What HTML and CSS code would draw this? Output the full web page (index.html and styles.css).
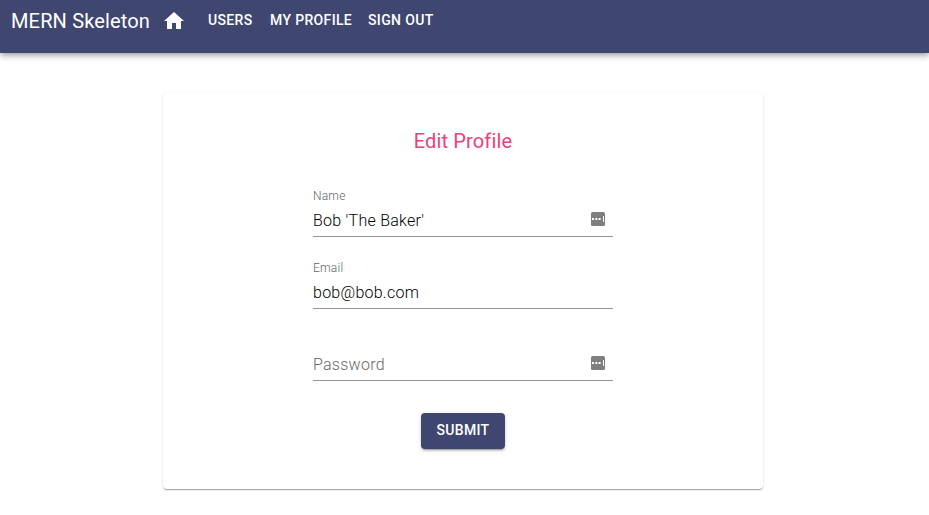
FILE: index.html
```html
<!DOCTYPE html>
<html lang="en">
<head>
<meta charset="utf-8">
<title>MERN Skeleton</title>
<link rel="stylesheet" href="styles.css">
</head>
<body>
<header class="bar">
  <h1 class="brand">MERN Skeleton</h1>
  <a class="home"><svg viewBox="0 0 24 24"><path d="M10 20v-6h4v6h5v-8h3L12 3 2 12h3v8z"/></svg></a>
  <nav class="nav">
    <a class="link users">Users</a>
    <a class="link profile">My Profile</a>
    <a class="link signout">Sign out</a>
  </nav>
</header>
<main class="card">
  <h2 class="title">Edit Profile</h2>
  <div class="field">
    <span class="label">Name</span>
    <div class="row"><span class="value">Bob 'The Baker'</span><svg class="key" viewBox="0 0 14 14"><rect width="14" height="14" rx="1.5"/><path d="M1 6h2v2H1zM4.3 6h2v2h-2zM7.6 6h2v2h-2zM12 4h1v6h-1z"/></svg></div>
  </div>
  <div class="field">
    <span class="label">Email</span>
    <div class="row"><span class="value">bob@bob.com</span></div>
  </div>
  <div class="field">
    <span class="label"></span>
    <div class="row"><span class="value placeholder">Password</span><svg class="key" viewBox="0 0 14 14"><rect width="14" height="14" rx="1.5"/><path d="M1 6h2v2H1zM4.3 6h2v2h-2zM7.6 6h2v2h-2zM12 4h1v6h-1z"/></svg></div>
  </div>
  <button class="submit">Submit</button>
</main>
</body>
</html>
```
FILE: styles.css
```css
* { box-sizing: border-box; }
body { margin: 0; min-height: 515px; background: #fff; font-family: Roboto, sans-serif; }
.bar { height: 53px; padding: 5px 0 0 11px; display: flex; align-items: flex-start; background: #3f4771; color: #fff; box-shadow: 0 2px 4px -1px rgba(0,0,0,.2), 0 4px 5px rgba(0,0,0,.14), 0 1px 10px rgba(0,0,0,.12); }
.brand { margin: 0; width: 151px; font-size: 20px; line-height: 32px; font-weight: 400; letter-spacing: .15px; white-space: nowrap; }
.home { width: 24px; height: 24px; margin-top: 4px; }
.home svg { display: block; width: 24px; height: 24px; fill: #fff; }
.nav { display: flex; margin-left: 22px; }
.link { font-size: 14px; line-height: 30px; font-weight: 500; letter-spacing: .35px; text-transform: uppercase; white-space: nowrap; }
.users { width: 62px; }
.profile { width: 98px; }
.card { width: 600px; height: 396px; margin: 40px 0 0 163px; padding-top: 32px; display: flex; flex-direction: column; align-items: center; border-radius: 4px; background: #fff; box-shadow: 0 2px 1px -1px rgba(0,0,0,.2), 0 1px 1px rgba(0,0,0,.14), 0 1px 3px rgba(0,0,0,.12); }
.title { margin: 0 0 24px; font-size: 20px; line-height: 32px; font-weight: 400; letter-spacing: .15px; color: #ec407a; }
.field { width: 300px; height: 48px; margin: 8px 0 16px; }
.field .label { display: block; height: 16px; font-size: 12px; line-height: 14px; font-weight: 300; letter-spacing: .2px; color: #666; }
.row { height: 32px; display: flex; align-items: center; justify-content: space-between; border-bottom: 1px solid #949494; padding-right: 8px; }
.value { font-size: 16px; line-height: 30px; font-weight: 300; letter-spacing: .26px; color: #000; }
.placeholder { color: #666; }
.key { width: 14px; height: 14px; margin-bottom: 4px; fill: #7f7f7f; }
.key path { fill: #fff; }
.submit { width: 84px; height: 36px; margin-top: 16px; padding: 0 0 2px; border: 0; border-radius: 4px; background: #3f4771; color: #fff; font: 500 14px/24px Roboto, sans-serif; letter-spacing: .3px; text-transform: uppercase; box-shadow: 0 3px 1px -2px rgba(0,0,0,.2), 0 2px 2px rgba(0,0,0,.14), 0 1px 5px rgba(0,0,0,.12); }
```
